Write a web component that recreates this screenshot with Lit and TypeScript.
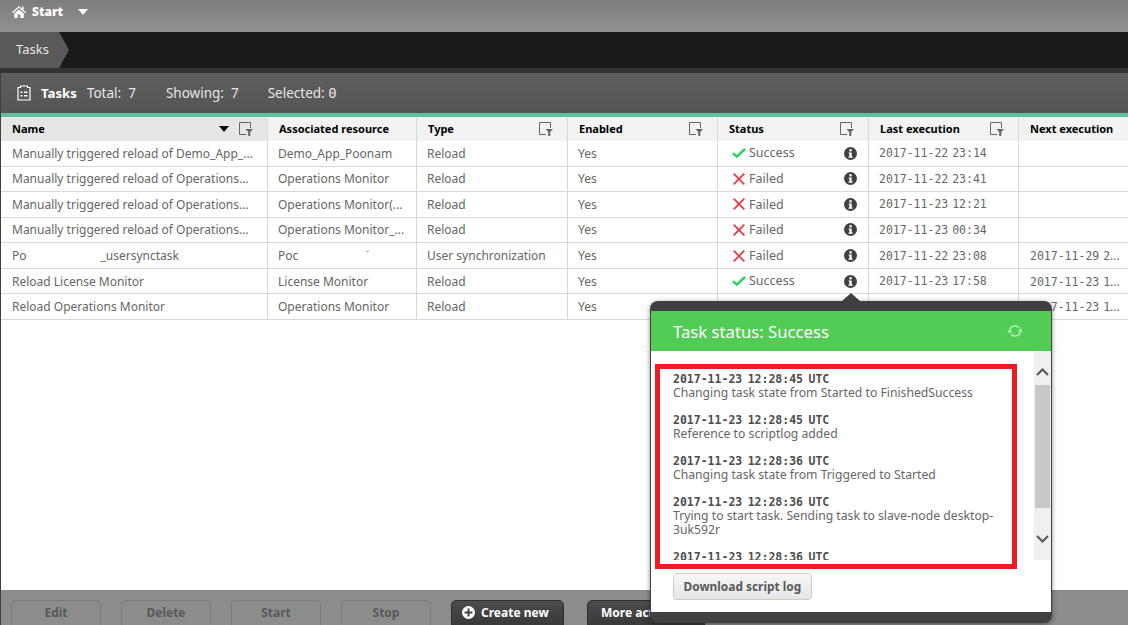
import { LitElement, html, css } from 'lit';
import { customElement } from 'lit/decorators.js';

const filterIcon = html`<svg class="filter" width="14" height="14" viewBox="0 0 14 14">
  <path d="M7 12.5H.5V.5h11V6" fill="none" stroke="#666" stroke-width="1"/>
  <path d="M6.5 7h7.5l-2.7 3v4H9.2v-4z" fill="#666"/>
</svg>`;

const infoIcon = html`<svg class="info" width="13" height="13" viewBox="0 0 13 13">
  <circle cx="6.5" cy="6.5" r="6.5" fill="#404040"/>
  <rect x="5.4" y="2.2" width="2.3" height="2.2" fill="#fff"/>
  <path d="M4.6 5.4h3.1v4.2h.9v1.2H4.5V9.6h.9V6.6h-.8z" fill="#fff"/>
</svg>`;

const okIcon = html`<svg width="14" height="10" viewBox="0 0 14 10">
  <path d="M1 5l3.8 3.6L13 1" fill="none" stroke="#1fd655" stroke-width="2.4"/>
</svg>`;

const failIcon = html`<svg class="fail" width="12" height="12" viewBox="0 0 12 12">
  <path d="M.7.7l10.6 10.6M11.3.7L.7 11.3" fill="none" stroke="#f0333c" stroke-width="1.7"/>
</svg>`;

type Row = { name: unknown; res: unknown; type: string; ok: boolean; last: string; next: string };

const rows: Row[] = [
  { name: 'Manually triggered reload of Demo_App_...', res: 'Demo_App_Poonam', type: 'Reload', ok: true, last: '2017-11-22 23:14', next: '' },
  { name: 'Manually triggered reload of Operations...', res: 'Operations Monitor', type: 'Reload', ok: false, last: '2017-11-22 23:41', next: '' },
  { name: 'Manually triggered reload of Operations...', res: 'Operations Monitor(...', type: 'Reload', ok: false, last: '2017-11-23 12:21', next: '' },
  { name: 'Manually triggered reload of Operations...', res: 'Operations Monitor_...', type: 'Reload', ok: false, last: '2017-11-23 00:34', next: '' },
  {
    name: html`Po<span class="gap"></span>_usersynctask`,
    res: html`Poc<i class="speck"></i>`,
    type: 'User synchronization',
    ok: false,
    last: '2017-11-22 23:08',
    next: '2017-11-29 2',
  },
  { name: 'Reload License Monitor', res: 'License Monitor', type: 'Reload', ok: true, last: '2017-11-23 17:58', next: '2017-11-23 1' },
  { name: 'Reload Operations Monitor', res: 'Operations Monitor', type: 'Reload', ok: true, last: '', next: '2017-11-23 1' },
];

const logs = [
  { time: '2017-11-23 12:28:45 UTC', text: 'Changing task state from Started to FinishedSuccess' },
  { time: '2017-11-23 12:28:45 UTC', text: 'Reference to scriptlog added' },
  { time: '2017-11-23 12:28:36 UTC', text: 'Changing task state from Triggered to Started' },
  { time: '2017-11-23 12:28:36 UTC', text: 'Trying to start task. Sending task to slave-node desktop-3uk592r' },
  { time: '2017-11-23 12:28:36 UTC', text: '' },
];

@customElement('app-root')
export class AppRoot extends LitElement {
  static styles = css`
    :host {
      display: flex;
      flex-direction: column;
      position: relative;
      width: 1128px;
      height: 625px;
      overflow: hidden;
      background: #fff;
      font-family: 'Noto Sans', sans-serif;
      font-size: 12px;
      color: #666;
    }
    .topbar {
      height: 32px;
      flex: none;
      display: flex;
      align-items: flex-start;
      padding: 4px 0 0 12px;
      box-sizing: border-box;
      gap: 6px;
      background: linear-gradient(#7c7c7c, #929292);
      color: #fff;
      font-weight: 700;
    }
    .topbar b { line-height: 16px; }
    .caret {
      width: 0;
      height: 0;
      border: 5px solid transparent;
      border-top: 6px solid #fff;
      border-bottom: 0;
      margin: 5px 0 0 9px;
    }
    .crumbs {
      height: 36px;
      flex: none;
      background: #1a1a1a;
      display: flex;
    }
    .crumb {
      width: 69px;
      box-sizing: border-box;
      padding-left: 16px;
      line-height: 35px;
      font-size: 13px;
      color: #e6e6e6;
      background: #595959;
      clip-path: polygon(0 0, 59px 0, 69px 50%, 59px 100%, 0 100%);
    }
    .gapbar {
      height: 5px;
      flex: none;
      background: #333;
    }
    .panel {
      flex: 1;
      display: flex;
      flex-direction: column;
      border-left: 1px solid #404040;
      min-height: 0;
    }
    .panelhead {
      height: 40px;
      flex: none;
      box-sizing: border-box;
      background: linear-gradient(#5e5e5e, #555);
      display: flex;
      align-items: center;
      padding-left: 16px;
      color: #e6e6e6;
      font-size: 13.5px;
    }
    .panelhead b { color: #fff; margin-left: 10px; font-size: 13.2px; }
    .panelhead span { white-space: pre; }
    .zero { font-family: 'DejaVu Sans Mono', monospace; font-size: 14px; }
    .accent {
      height: 4px;
      flex: none;
      background: #5fc0a0;
    }
    .row {
      display: grid;
      grid-template-columns: 267px 149px 151px 150px 151px 150px 109px;
    }
    .row.head {
      height: 24px;
      background: #f2f2f2;
      color: #000;
      font-weight: 700;
      font-size: 11px;
    }
    .row.head .cell { padding-bottom: 1px; box-sizing: border-box; }
    .row.body {
      height: 25.57px;
      box-sizing: border-box;
      border-bottom: 1px solid #d9d9d9;
      background: #fff;
    }
    .cell {
      display: flex;
      align-items: center;
      padding-left: 11px;
      border-right: 1px solid #d9d9d9;
      white-space: nowrap;
      overflow: hidden;
      min-width: 0;
      position: relative;
    }
    .cell:last-child { border-right: 0; }
    .body .cell { padding-left: 10px; }
    .body .cell:first-child { padding-left: 11px; }
    .body .cell:last-child { padding-left: 11px; }
    .head .cell { justify-content: space-between; padding-right: 14px; }
    .head .cell:first-child { background: #e6e6e6; }
    .sorted { display: flex; align-items: center; gap: 10px; }
    .sort {
      width: 0;
      height: 0;
      border: 5px solid transparent;
      border-top: 6px solid #000;
      border-bottom: 0;
    }
    .gap { display: inline-block; width: 74px; }
    .speck {
      position: absolute;
      left: 98px;
      top: 8px;
      width: 3px;
      height: 1px;
      background: #aaa;
    }
    .body .status { justify-content: flex-start; gap: 3px; padding-left: 14px; padding-right: 11px; }
    .status .label { flex: 1; font-size: 12.5px; }
    .status .label.up { margin-top: -1px; }
    .status .fail { margin: 0 1px; }
    .mono { font-family: 'DejaVu Sans Mono', monospace; font-size: 11.5px; word-spacing: -3px; }
    .dots { font-family: 'Noto Sans', sans-serif; font-size: 12px; }
    .toolbar {
      height: 35px;
      flex: none;
      background: #8c8c8c;
      display: flex;
      gap: 20px;
      padding: 10px 0 0 10px;
      box-sizing: border-box;
    }
    .btn {
      width: 90px;
      height: 34px;
      box-sizing: border-box;
      border: 1px solid #7a7a7a;
      border-radius: 5px;
      text-align: center;
      line-height: 24px;
      font-weight: 700;
      color: #595959;
    }
    .btn.dark {
      background: linear-gradient(#4c4c4c, #333);
      color: #fff;
      border-color: #2e2e2e;
      display: flex;
      align-items: flex-start;
      gap: 6px;
      padding-left: 10px;
      white-space: nowrap;
    }
    .btn.dark svg { margin-top: 5px; flex: none; }
    .create { width: 113px; margin-right: 3px; }
    .btn.more { width: 118px; padding-left: 13px; }
    .pop {
      position: absolute;
      left: 650px;
      top: 301px;
      width: 402px;
      height: 322px;
      box-sizing: border-box;
      background: #404040;
      border-radius: 8px;
      padding: 10px 1px 11px;
      display: flex;
      flex-direction: column;
      box-shadow: 0 1px 5px rgba(0, 0, 0, 0.45);
    }
    .arrow {
      position: absolute;
      left: 192px;
      top: -8px;
      width: 0;
      height: 0;
      border: 9px solid transparent;
      border-bottom: 8px solid #404040;
      border-top: 0;
    }
    .pophead {
      height: 40px;
      flex: none;
      background: #52cc55;
      color: #fff;
      font-size: 16.7px;
      display: flex;
      align-items: center;
      justify-content: space-between;
      padding: 0 28px 0 22px;
    }
    .popbody {
      flex: 1;
      background: #fff;
      position: relative;
      min-height: 0;
      display: flex;
      flex-direction: column;
    }
    .logwrap { display: flex; height: 209px; flex: none; }
    .logs {
      flex: 1;
      overflow: hidden;
      padding: 21px 32px 0 22px;
      font-size: 12.2px;
      line-height: 14px;
    }
    .log { margin-bottom: 13px; }
    .log b {
      display: block;
      font-family: 'DejaVu Sans Mono', monospace;
      font-size: 11.5px;
      word-spacing: -1.5px;
      color: #4d4d4d;
    }
    .scroll {
      width: 17px;
      flex: none;
      background: #f0f0f0;
      display: flex;
      flex-direction: column;
      align-items: center;
    }
    .scroll svg { flex: none; margin-top: 17px; }
    .thumb { width: 15px; height: 123px; flex: none; background: #c8c8c8; margin-top: 9px; }
    .scroll .down { margin-top: 27px; }
    .redbox {
      position: absolute;
      left: 4px;
      top: 13px;
      width: 362px;
      height: 205px;
      box-sizing: border-box;
      border: 5px solid #ed1c24;
      pointer-events: none;
    }
    .dl {
      align-self: flex-start;
      margin: 13px 0 0 22px;
      height: 27px;
      box-sizing: border-box;
      padding: 0 9.5px;
      border: 1px solid #ccc;
      border-radius: 4px;
      background: linear-gradient(#f7f7f7, #e6e6e6);
      line-height: 25px;
      font-weight: 700;
      font-size: 11.9px;
      color: #595959;
    }
  `;

  render() {
    return html`
      <div class="topbar">
        <svg width="14" height="14" viewBox="0 0 14 14" style="margin-top:1px">
          <path d="M7 1L0 7.2l.8 1L7 2.8l6.2 5.4.8-1L11.5 5V1.5H10V3.7zM2.2 8.6V13h3.4V9.5h2.8V13h3.4V8.6L7 4.4z" fill="#fff"/>
        </svg>
        <b>Start</b><span class="caret"></span>
      </div>
      <div class="crumbs"><div class="crumb">Tasks</div></div>
      <div class="gapbar"></div>
      <div class="panel">
        <div class="panelhead">
          <svg width="14" height="16" viewBox="0 0 14 16">
            <path d="M1 2.5h2.5V1h7v1.5H13v12.5H1z" fill="none" stroke="#fff" stroke-width="1.2"/>
            <path d="M3.5 6.5h2v1.5h-2zM7 6.5h3.5v1.5H7zM3.5 10h2v1.5h-2zM7 10h3.5v1.5H7z" fill="#fff"/>
          </svg>
          <b>Tasks</b>
          <span style="margin-left:10px">Total:  7</span>
          <span style="margin-left:30px">Showing:  7</span>
          <span style="margin-left:29px">Selected: <span class="zero">0</span></span>
        </div>
        <div class="accent"></div>
        <div class="row head">
          <div class="cell">Name<span class="sorted"><i class="sort"></i>${filterIcon}</span></div>
          <div class="cell">Associated resource</div>
          <div class="cell">Type${filterIcon}</div>
          <div class="cell">Enabled${filterIcon}</div>
          <div class="cell">Status${filterIcon}</div>
          <div class="cell">Last execution${filterIcon}</div>
          <div class="cell">Next execution</div>
        </div>
        ${rows.map(
          (r) => html`<div class="row body">
            <div class="cell">${r.name}</div>
            <div class="cell">${r.res}</div>
            <div class="cell">${r.type}</div>
            <div class="cell">Yes</div>
            <div class="cell status">${r.ok ? okIcon : failIcon}<span class="label ${r.ok ? 'up' : ''}">${r.ok ? 'Success' : 'Failed'}</span>${infoIcon}</div>
            <div class="cell mono">${r.last}</div>
            <div class="cell mono"><span>${r.next}${r.next ? html`<span class="dots">...</span>` : ''}</span></div>
          </div>`
        )}
        <div style="flex:1"></div>
        <div class="toolbar">
          <div class="btn">Edit</div>
          <div class="btn">Delete</div>
          <div class="btn">Start</div>
          <div class="btn">Stop</div>
          <div class="btn dark create">
            <svg width="13" height="13" viewBox="0 0 13 13">
              <circle cx="6.5" cy="6.5" r="6.5" fill="#fff"/>
              <path d="M5.5 2.5h2v3h3v2h-3v3h-2v-3h-3v-2h3z" fill="#404040"/>
            </svg>
            Create new
          </div>
          <div class="btn dark more">More actions</div>
        </div>
      </div>
      <div class="pop">
        <i class="arrow"></i>
        <div class="pophead">
          Task status: Success
          <svg width="16" height="14" viewBox="0 0 16 14">
            <path d="M2.6 6.5A5.3 5.3 0 0 1 12 4M13.4 7.5A5.3 5.3 0 0 1 4 10" fill="none" stroke="#b9efba" stroke-width="1.4"/>
            <path d="M0 6.5h5.2L2.6 9.4zM16 7.5h-5.2l2.6-2.9z" fill="#b9efba"/>
          </svg>
        </div>
        <div class="popbody">
          <div class="logwrap">
            <div class="logs">
              ${logs.map((l) => html`<div class="log"><b>${l.time}</b>${l.text}</div>`)}
            </div>
            <div class="scroll">
              <svg width="13" height="8" viewBox="0 0 13 8"><path d="M1 7l5.5-5.5L12 7" fill="none" stroke="#595959" stroke-width="2.2"/></svg>
              <div class="thumb"></div>
              <svg class="down" width="13" height="8" viewBox="0 0 13 8"><path d="M1 1l5.5 5.5L12 1" fill="none" stroke="#595959" stroke-width="2.2"/></svg>
            </div>
          </div>
          <div class="dl">Download script log</div>
          <div class="redbox"></div>
        </div>
      </div>
    `;
  }
}
